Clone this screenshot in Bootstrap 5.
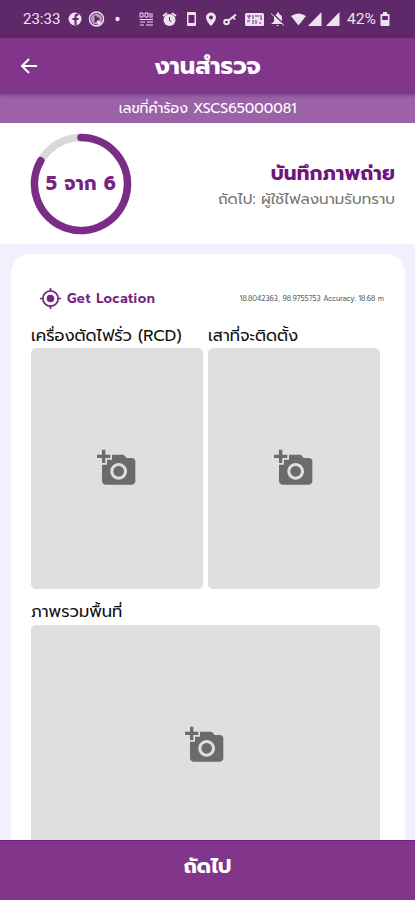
<!DOCTYPE html>
<html lang="th">
<head>
<meta charset="utf-8">
<meta name="viewport" content="width=device-width, initial-scale=1">
<title>งานสำรวจ</title>
<link href="https://cdn.jsdelivr.net/npm/bootstrap@5.3.0/dist/css/bootstrap.min.css" rel="stylesheet">
<style>
body{font-family:Prompt,"Open Sans","Noto Sans Thai",sans-serif;background:#f2effe;height:900px;line-height:1}
svg{display:block;flex:none}
.app{height:900px}
.txt{white-space:nowrap;line-height:24px}
.status-strip{height:38px;background:#5f2869;color:#eee2f0;padding-left:23px}
.status-strip .txt{font-family:Roboto,sans-serif;font-size:15px}
.title-bar{height:56px;background:#81358b;color:#fff;display:grid;grid-template-columns:58px 1fr 58px;box-shadow:0 1px 4px #52205a99;z-index:1;flex:none}
.title-bar h1{font-size:24px;margin:0}
.request-strip{height:29px;background:#9b62a8;color:#fff;font-size:14.1px;flex:none}
.progress-panel{height:121px;padding:0 20px 0 30px;flex:none}
.ring{width:102px;height:102px;display:grid;place-items:center}
.ring>*{grid-area:1/1}
.ring .txt{font-size:19px;font-weight:700;letter-spacing:.4px;color:#752580}
.step-name{color:#71147d;font-size:19.8px;font-weight:700;letter-spacing:.2px;line-height:27px!important}
.step-next{color:#777;font-size:15.1px}
.sheet{margin:10px 10px 0 11px;border-radius:20px 20px 0 0;padding:29px 25px 0 20px}
.locate{height:31px;padding-left:8px;color:#752580;font-size:13.3px}
.locate .action{font-weight:600;letter-spacing:.5px;margin-left:5px}
.coords{font-size:7.1px;color:#666;margin-right:-4px}
.label{height:34px;font-size:16.3px;color:#111;padding-top:10px}
.label2{height:36px;font-size:16.3px;color:#111;padding-top:11px}
.photo{background:#dfdfdf;border-radius:5px;height:241px}
.photo svg{margin:0 1px 1px 0}
.photos{gap:5px}
.next-bar{height:60px;background:#81358b;color:#fff;font-size:20.3px;border-top:1px solid #6f2178;padding-bottom:8px;flex:none}
</style>
<script src="https://cdn.jsdelivr.net/npm/bootstrap@5.3.0/dist/js/bootstrap.bundle.min.js"></script>
</head>
<body class="overflow-hidden">
<svg width="0" height="0" class="position-absolute"><symbol id="camera" viewBox="0 0 24 24"><path fill="#6b6b6b" d="M3 4V1h2v3h3v2H5v3H3V6H0V4h3zm3 6V7h3V4h7l1.830 2H21c1.100 0 2 .9 2 2v12c0 1.100-.9 2-2 2H5c-1.100 0-2-.9-2-2V10h3zm7 9c2.760 0 5-2.240 5-5s-2.240-5-5-5-5 2.240-5 5 2.240 5 5 5zm-3.200-5c0 1.770 1.430 3.200 3.200 3.200s3.200-1.430 3.200-3.200-1.430-3.200-3.200-3.200-3.200 1.430-3.200 3.200z"/></symbol></svg>
<div class="app d-flex flex-column">
<div class="status-strip d-flex align-items-center flex-shrink-0">
<span class="txt">23:33</span>
<svg width="332" height="38" viewBox="60 0 332 38" fill="#eee2f0">
<circle cx="75" cy="19" r="6.500"/><path d="M76.500 25v-5h2v-2h-2v-1.500q0-1 2-1v-2q-4-.5-4 3V18h-2v2h2v5z" fill="#5f2869"/>
<circle cx="96.500" cy="19" r="7" fill="none" stroke="#eee2f0" stroke-width="1.500"/><circle cx="96.500" cy="19" r="5.500" opacity=".65"/><path d="M94.500 15v8l6-4z" fill="#5f2869"/><path d="M97 20l5 3-4 2z"/>
<circle cx="117.500" cy="19" r="2.200"/>
<g fill="none" stroke="#eee2f0" stroke-width="1"><path d="M140 13h3v4h-3zM145 13h3v4h-3zM150 13v5M152 13v5M139.500 19.500h13.500M140 22h5M147 22h6M140 25h4M146 25h7"/></g>
<circle cx="169.500" cy="20" r="6"/><path d="M163 16l4-3M176 16l-4-3" stroke="#eee2f0" stroke-width="1.800"/><path d="M169.500 17v3.500l2 1" fill="none" stroke="#5f2869"/>
<path fill-rule="evenodd" d="M188 12h7q1 0 1 1v12q0 1-1 1h-7q-1 0-1-1V13q0-1 1-1zm.5 3v8h6v-8z"/>
<path fill-rule="evenodd" d="M211 12.500a5 5 0 0 1 5 5c0 3.500-5 8.500-5 8.500s-5-5-5-8.500a5 5 0 0 1 5-5zm0 3a2 2 0 1 0 0 4 2 2 0 0 0 0-4z"/>
<g fill="none" stroke="#eee2f0" stroke-width="2"><circle cx="226.500" cy="22" r="2.300"/><path d="M228.500 20.500l7.500-6M233 17l2 2.500"/></g>
<rect x="245" y="13" width="19" height="13" rx="1.500"/><path d="M247 16h4M249 16v3M253 15v4M255 16h4M261 15v5M247 21h3M253 20v4M256 20v4M259 23h2" stroke="#5f2869" stroke-width="1" fill="none"/>
<path d="M271 24h13l-2-2.500V18q0-3-3-4v-1.500h-2V14q-3 1-3 4v3.500zM276 25h3q-1.500 2-3 0z"/><path d="M271.500 12.500l13 12" stroke="#5f2869" stroke-width="1.500"/><path d="M271 13.500l13 12" stroke="#eee2f0"/>
<path d="M291 16q7.500-5 15 0l-7.500 9.500zM321.500 12v14H308zM339.500 12v14H326z"/>
<text x="347" y="24" font-family="Roboto" font-size="14.500" textLength="29" lengthAdjust="spacingAndGlyphs">42%</text>
<path fill-rule="evenodd" d="M383 12h4v2h1.500q1 0 1 1v10q0 1-1 1h-7q-1 0-1-1V15q0-1 1-1h1.500zm-.8 4v4h5.600v-4z"/>
</svg>
</div>
<header class="title-bar align-items-center position-relative">
<svg class="ms-auto me-auto" width="24" height="24" viewBox="0 0 24 24"><path d="M20 12H5M12 5l-7 7 7 7" fill="none" stroke="#fff" stroke-width="2"/></svg>
<h1 class="txt text-center fw-bold">งานสำรวจ</h1></header>
<div class="request-strip d-flex align-items-center justify-content-center"><span class="txt">เลขที่คำร้อง XSCS65000081</span></div>
<section class="progress-panel bg-white d-flex align-items-center justify-content-between">
<div class="ring"><svg width="102" height="102" fill="none" stroke-width="7.500"><circle cx="51" cy="51" r="46.500" stroke="#d8d8d8"/><path d="M51 4.500A46.500 46.500 0 1 1 10.700 27.750" stroke="#7b2c86" stroke-linecap="round"/></svg><span class="txt">5 จาก 6</span></div>
<div class="text-end pt-1"><div class="txt step-name">บันทึกภาพถ่าย</div><div class="txt step-next">ถัดไป: ผู้ใช้ไฟลงนามรับทราบ</div></div>
</section>
<main class="sheet bg-white flex-grow-1 overflow-hidden">
<div class="locate d-flex align-items-center justify-content-between">
<div class="d-flex align-items-center"><svg width="23" height="23" viewBox="0 0 24 24" fill="none" stroke="#752580" stroke-width="1.800"><circle cx="12" cy="12" r="8"/><circle cx="12" cy="12" r="4" fill="#752580" stroke="none"/><path d="M12 1v3M12 20v3M1 12h3M20 12h3"/></svg><span class="txt action">Get Location</span></div>
<span class="txt coords">18.8042363, 98.9755753 Accuracy: 18.68 m</span></div>
<div class="photos d-flex">
<div class="w-50"><div class="label txt">เครื่องตัดไฟรั่ว (RCD)</div><div class="photo d-flex align-items-center justify-content-center"><svg width="40" height="40"><use href="#camera"/></svg></div></div>
<div class="w-50"><div class="label txt">เสาที่จะติดตั้ง</div><div class="photo d-flex align-items-center justify-content-center"><svg width="40" height="40"><use href="#camera"/></svg></div></div>
</div>
<div class="label2 txt">ภาพรวมพื้นที่</div><div class="photo d-flex align-items-center justify-content-center"><svg width="40" height="40"><use href="#camera"/></svg></div>
</main>
<footer class="next-bar d-flex align-items-center justify-content-center"><span class="txt fw-bold">ถัดไป</span></footer>
</div>
</body>
</html>
